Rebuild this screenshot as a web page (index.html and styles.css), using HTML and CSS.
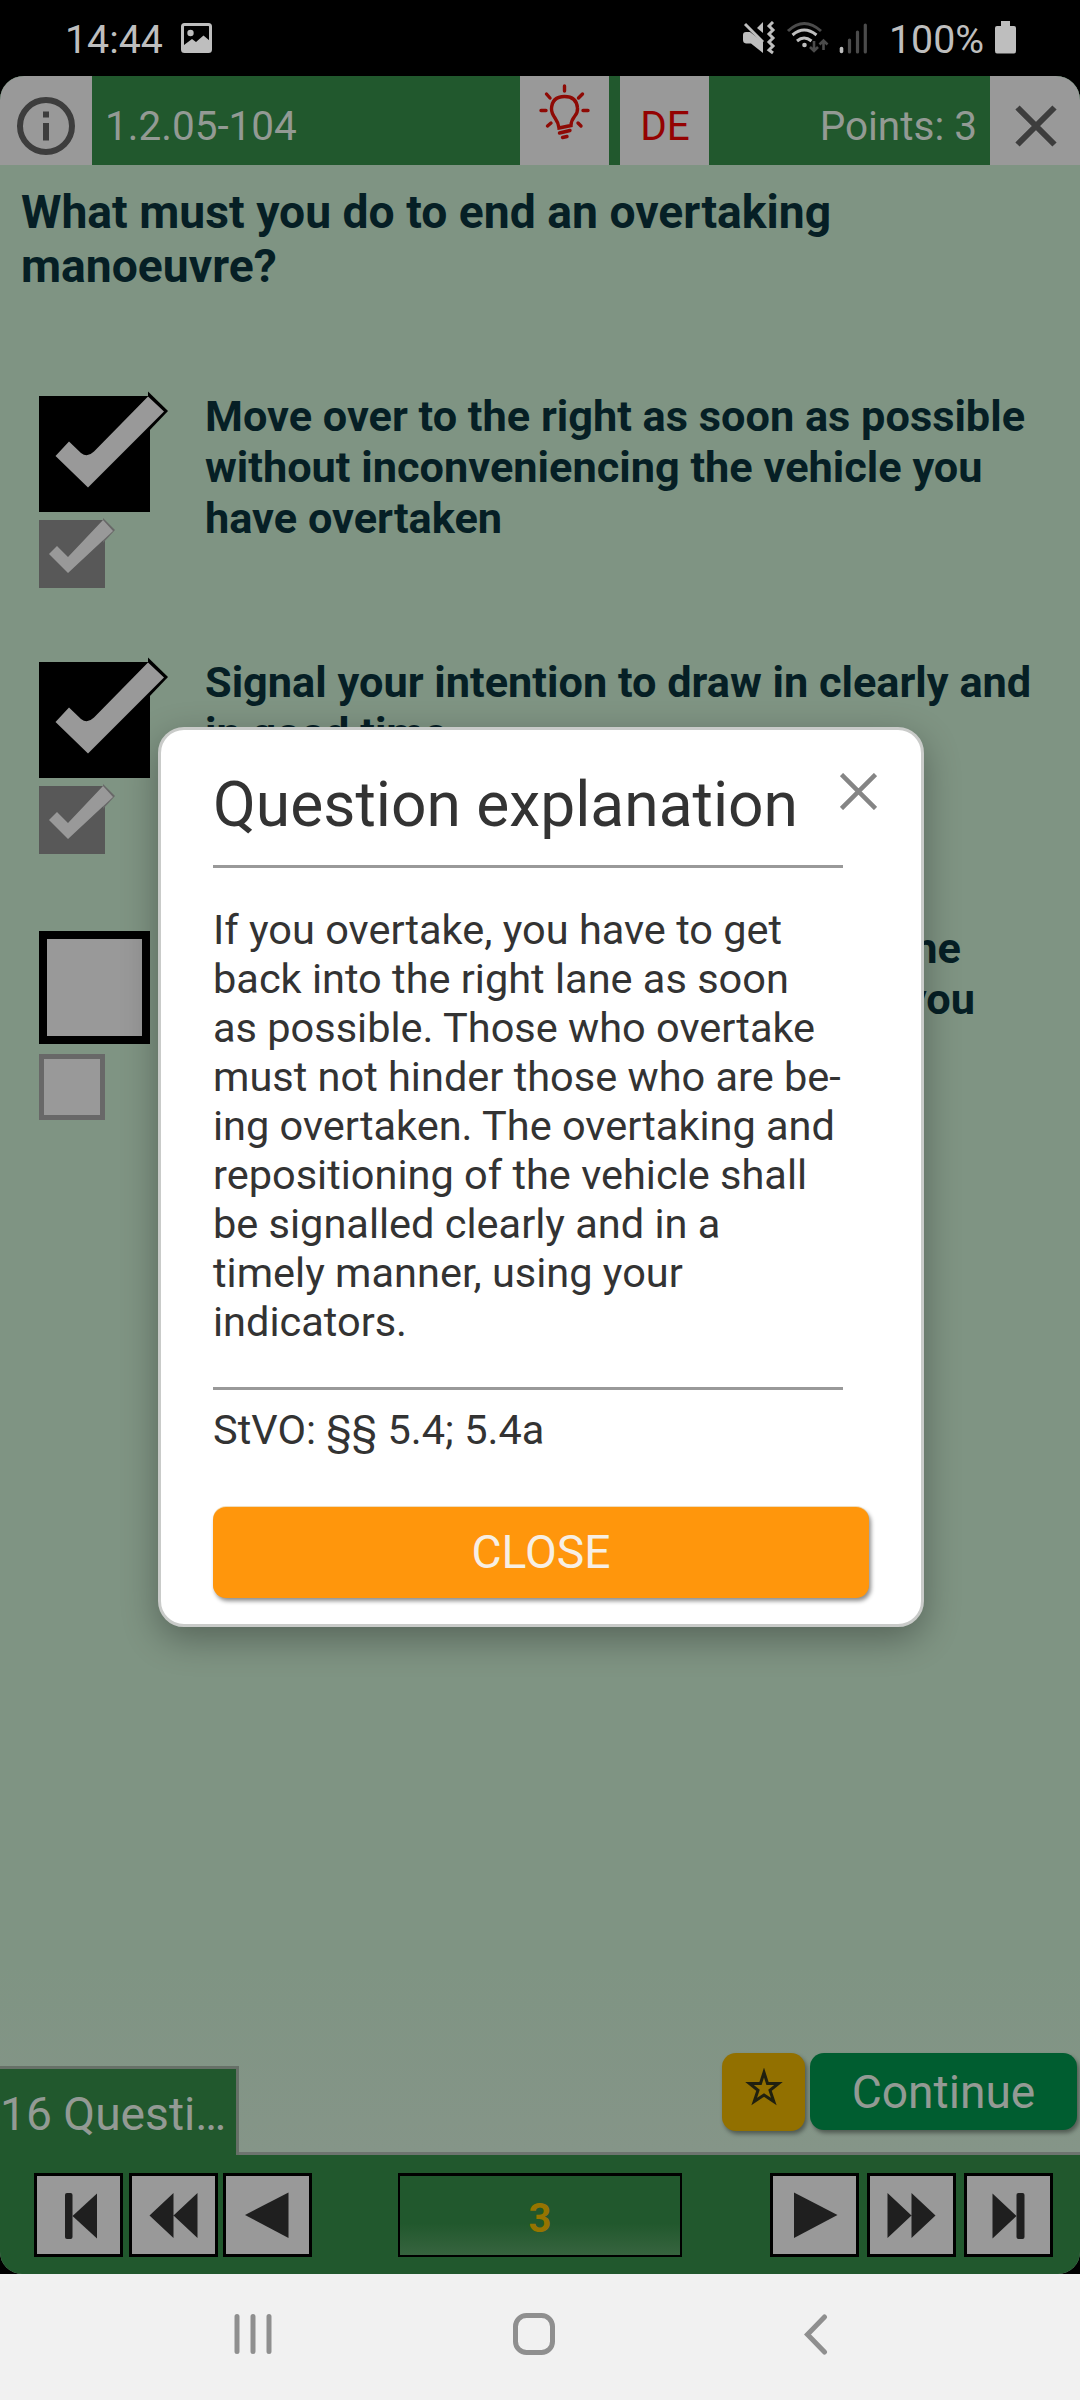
FILE: index.html
```html
<!DOCTYPE html>
<html lang="en">
<head>
<meta charset="utf-8">
<title>Question explanation</title>
<link rel="stylesheet" href="styles.css">
</head>
<body>
<svg width="0" height="0" class="defs">
  <symbol id="tick-large" viewBox="0 0 132 124">
    <path d="M0 5H111V121H0Z" fill="#000"/>
    <path d="M109 0.500L129 20L109 41V12Z" fill="#000"/>
    <path d="M109 5.500L125 20.500L49 96.500L16.500 65L30 50.500L42 62Q48.500 67 55 60.500Z" fill="#999"/>
  </symbol>
  <symbol id="tick-small" viewBox="0 0 80 70">
    <path d="M0 2H66V70H0Z" fill="#585858"/>
    <path d="M64 0L76 12L64 25Z" fill="#686868"/>
    <path d="M64 2L74 13L29 55L10 36L18 28L29 39Z" fill="#999"/>
  </symbol>
</svg>
<div class="phone">
  <header class="status">
    <span class="clock">14:44</span>
    <svg class="photo" width="31" height="30" viewBox="0 0 31 30"><rect x="1.500" y="1.500" width="28" height="27" rx="2" fill="none" stroke="#bebebe" stroke-width="3"/><circle cx="9.500" cy="10" r="3.200" fill="#bebebe"/><path d="M3 22L11 16L15 19L22.500 12.500L29 18V28H3Z" fill="#bebebe"/></svg>
    <svg class="signals" width="126" height="34" viewBox="742 21 126 34" fill="none">
      <path d="M743 35Q743 32 746 32H750L763 42V53L751 43.500H746Q743 43 743 40Z" fill="#bebebe"/>
      <path d="M757 28L763 22V33Z" fill="#bebebe"/>
      <path d="M745 24L763 42" stroke="#bebebe" stroke-width="3"/>
      <path d="M773 22L769 26L773 30L769 34L773 38L769 42L773 46L769 50L773 53" stroke="#bebebe" stroke-width="3"/>
      <path d="M788 31Q804 16 821 31" stroke="#4b4b4b" stroke-width="3"/>
      <path d="M792.500 35Q804 25 816.500 35M797 41Q804 35 811.500 41" stroke="#bebebe" stroke-width="3"/>
      <circle cx="804.500" cy="45" r="2.300" fill="#bebebe"/>
      <path d="M814 41V51M810 47L814 51L818 47M823.500 50V40M819.500 44.500L823.500 40.500L827.500 44.500" stroke="#4b4b4b" stroke-width="2.600"/>
      <path d="M841.500 48.500V51.500" stroke="#bebebe" stroke-width="3.600" stroke-linecap="round"/>
      <path d="M849.500 40V52M857.500 32V52M865.300 25V52" stroke="#4b4b4b" stroke-width="3.200" stroke-linecap="round"/>
    </svg>
    <span class="percent">100%</span>
    <svg class="battery" width="21" height="33" viewBox="0 0 21 33"><path d="M6 0H15V5H19Q21 5 21 7V30Q21 32.500 19 32.500H2Q0 32.500 0 30V7Q0 5 2 5H6Z" fill="#bebebe"/></svg>
  </header>

  <main class="app">
    <div class="toolbar">
      <button class="tool info"><svg width="60" height="60" viewBox="0 0 60 60"><circle cx="30" cy="30" r="26" fill="none" stroke="#3d3d3d" stroke-width="6"/><path d="M27 15.500H33V21.500H27ZM27 27H33V44.500H27Z" fill="#3d3d3d"/></svg></button>
      <span class="number">1.2.05-104</span>
      <button class="tool hint"><svg width="51" height="56" viewBox="0 0 51 56" fill="none" stroke="#8e0a05" stroke-width="3.400" stroke-linecap="round"><path d="M20 44L32 41.500Q32 37 35.500 32.500Q39 28.500 38.500 24Q37.500 12.500 25.500 12.500Q13 12.500 12.500 25Q12.500 29 16 34Q19.500 39 20 44ZM20.500 49L31 46.500M23.500 53.500L28 52.500M25.500 2V7M7.500 10L11 14M43.500 10L39.500 14M2 26.500H7M44 26.500H49M8.500 42L12 39M42 42L39 39"/></svg></button>
      <button class="tool lang">DE</button>
      <span class="points">Points: 3</span>
      <button class="tool close"><svg width="42" height="42" viewBox="0 0 42 42"><path d="M2.500 2.500L39.500 39.500M39.500 2.500L2.500 39.500" stroke="#3d3d3d" stroke-width="6"/></svg></button>
    </div>

    <h1 class="question">What must you do to end an overtaking manoeuvre?</h1>

    <section class="options">
      <div class="option">
        <div class="checks"><svg class="large" width="132" height="124"><use href="#tick-large"/></svg><svg class="small" width="80" height="70"><use href="#tick-small"/></svg></div>
        <p>Move over to the right as soon as possible<br>without inconveniencing the vehicle you<br>have overtaken</p>
      </div>
      <div class="option">
        <div class="checks"><svg class="large" width="132" height="124"><use href="#tick-large"/></svg><svg class="small" width="80" height="70"><use href="#tick-small"/></svg></div>
        <p>Signal your intention to draw in clearly and<br>in good time</p>
      </div>
      <div class="option">
        <div class="checks"><span class="box"></span><span class="box mini"></span></div>
        <p class="covered"><span class="first">the</span><span class="second">you</span></p>
      </div>
    </section>

    <div class="actions">
      <div class="tab">16 Questi…</div>
      <button class="mark"><svg width="38" height="38" viewBox="0 0 38 38"><path d="M19 4.500L22.500 15.500H33.500L25 22.300L28.800 33.500L19 27L9.200 33.500L13 22.300L4.500 15.500H15.500Z" fill="none" stroke="#20200f" stroke-width="3"/></svg></button>
      <button class="continue">Continue</button>
    </div>

    <nav class="pager">
      <button class="step"><svg width="60" height="50" viewBox="0 0 60 50"><rect x="16" y="3" width="7.500" height="46" rx="2"/><path d="M23.500 26L48 3.500V48.500Z"/></svg></button>
      <button class="step"><svg width="60" height="50" viewBox="0 0 60 50"><path d="M5.500 25.500L29.500 3V25.500L53.500 3V48L29.500 25.500V48Z"/></svg></button>
      <button class="step"><svg width="60" height="50" viewBox="0 0 60 50"><path d="M7 25L50.500 2.500V48Z"/></svg></button>
      <div class="current">3</div>
      <button class="step"><svg width="60" height="50" viewBox="0 0 60 50"><path d="M52.500 25L9 2.500V48Z"/></svg></button>
      <button class="step"><svg width="60" height="50" viewBox="0 0 60 50"><path d="M53.500 25.500L29.500 3V25.500L5.500 3V48L29.500 25.500V48Z"/></svg></button>
      <button class="step"><svg width="60" height="50" viewBox="0 0 60 50"><rect x="37.500" y="3" width="8" height="46" rx="2"/><path d="M37.500 26L13.500 3.500V48.500Z"/></svg></button>
    </nav>

    <section class="dialog" role="dialog">
      <div class="dialog-head">
        <h2>Question explanation</h2>
        <svg class="dismiss" width="37" height="37" viewBox="0 0 37 37"><path d="M1.500 1.500L35.500 35.500M35.500 1.500L1.500 35.500" stroke="#858585" stroke-width="4.500"/></svg>
      </div>
      <hr>
      <p class="explain">If you overtake, you have to get<br>back into the right lane as soon<br>as possible. Those who overtake<br>must not hinder those who are be-<br>ing overtaken. The overtaking and<br>repositioning of the vehicle shall<br>be signalled clearly and in a<br>timely manner, using your<br>indicators.</p>
      <hr>
      <p class="law">StVO: §§ 5.4; 5.4a</p>
      <button class="dialog-close">CLOSE</button>
    </section>
  </main>

  <footer class="system">
    <svg width="38" height="40" viewBox="0 0 38 40"><path d="M3 2.500V37.500M19 2.500V37.500M35 2.500V37.500" stroke="#8f8f8f" stroke-width="5" stroke-linecap="round"/></svg>
    <svg width="42" height="42" viewBox="0 0 42 42"><rect x="2.500" y="2.500" width="37" height="37" rx="11" fill="none" stroke="#8f8f8f" stroke-width="5"/></svg>
    <svg width="24" height="41" viewBox="0 0 24 41"><path d="M20.500 3L3.500 20.500L20.500 38" fill="none" stroke="#8f8f8f" stroke-width="5" stroke-linecap="round"/></svg>
  </footer>
</div>
</body>
</html>
```
FILE: styles.css
```css
* { box-sizing: border-box; }

body {
  margin: 0;
  background: #000;
  font-family: Roboto, "Liberation Sans", sans-serif;
}

h1, h2, p { margin: 0; }

button {
  margin: 0;
  padding: 0;
  border: 0;
  font: inherit;
}

svg { display: block; flex: none; }

.defs { display: none; }

.phone {
  display: flex;
  flex-direction: column;
  width: 1080px;
  height: 2400px;
  overflow: hidden;
}

/* Android status bar */
.status {
  display: flex;
  height: 76px;
  padding: 21px 64px 0 65px;
  color: #bebebe;
  font-size: 39.3px;
  line-height: 38px;
}

.clock { width: 116px; }
.photo { margin-top: 2px; }
.signals { margin-left: auto; }
.percent { margin-left: 21px; width: 106px; }

/* Quiz page */
.app {
  position: relative;
  display: flex;
  flex-direction: column;
  height: 2198px;
  overflow: hidden;
  border-radius: 24px 24px 22px 22px;
  background: linear-gradient(#7f9483 0 1890px, #859588 2076px);
}

.toolbar {
  display: flex;
  height: 89px;
  background: #21582d;
  color: #939a94;
  font-size: 40.5px;
  line-height: 100px;
}

.tool {
  display: flex;
  align-items: center;
  justify-content: center;
  width: 89px;
  background: #999;
}

.info { width: 92px; padding-top: 11px; }
.number { width: 428px; padding-left: 13px; }
.hint { align-items: flex-start; padding-top: 8px; margin-right: 11px; }
.lang { align-items: flex-start; height: 89px; padding-left: 1px; color: #940202; }
.points { width: 281px; padding-right: 13px; text-align: right; }
.close { width: 90px; padding-top: 11px; padding-left: 1px; }

.question {
  height: 226px;
  padding: 20px 21px 0;
  color: #061f25;
  font-size: 46.25px;
  line-height: 54px;
}

.options { flex: 1; }

.option {
  display: flex;
  height: 266px;
  padding-left: 39px;
  color: #061f25;
  font-size: 43.3px;
  line-height: 51px;
  font-weight: 700;
}

.checks { width: 166px; }
.small { margin-top: 3px; }

.box {
  display: block;
  width: 111px;
  height: 113px;
  margin-top: 8px;
  border: 8px solid #000;
  background: #999;
}

.box.mini {
  width: 66px;
  height: 66px;
  margin-top: 10px;
  border: 5px solid #686868;
}

.covered { width: 770px; text-align: right; }
.covered span { display: block; }
.first { padding-right: 14px; }

.actions {
  display: flex;
  height: 102px;
  border-bottom: 3px solid #6d746f;
}

.tab {
  width: 239px;
  height: 89px;
  margin: 13px auto 0 0;
  border: solid #667067;
  border-width: 3px 3px 0 0;
  background: #21582d;
  color: #939a94;
  font-size: 46.2px;
  line-height: 90px;
  white-space: nowrap;
}

.mark, .continue {
  border-radius: 14px;
  box-shadow: 2px 3px 4px rgba(0, 0, 0, .4);
}

.mark {
  display: flex;
  justify-content: center;
  width: 83px;
  height: 78px;
  padding-top: 15px;
  background: #927000;
}

.continue {
  width: 267px;
  height: 77px;
  margin: 0 3px 0 5px;
  background: #005d30;
  color: #939a94;
  font-size: 46.2px;
  line-height: 79px;
}

.pager {
  display: grid;
  grid-template-columns: 89px 88px 169px 284px 171px 91px 91px;
  column-gap: 6px;
  height: 119px;
  padding: 18px 27px 17px 34px;
  background: #21582d;
}

.step {
  display: flex;
  align-items: center;
  justify-content: center;
  width: 89px;
  height: 84px;
  border: 3px solid #000;
  background: #999;
  fill: #1f1f1f;
}

.current {
  height: 84px;
  border: 2px solid #000;
  border-top-width: 3px;
  background: linear-gradient(#21582d 60%, #37643f);
  color: #967400;
  font-size: 40px;
  line-height: 85px;
  font-weight: 700;
  text-align: center;
}

.current ~ .step { justify-self: end; }

/* Explanation dialog floats over the quiz */
.dialog {
  position: absolute;
  top: 651px;
  left: 158px;
  width: 766px;
  height: 900px;
  padding: 39px 52px 0;
  border: 3px solid #c9cbc9;
  border-radius: 26px;
  background: #fff;
  box-shadow: 0 12px 36px rgba(0, 0, 0, .32);
  color: #333;
  font-size: 41.5px;
  line-height: 49px;
}

.dialog-head {
  display: flex;
  justify-content: space-between;
  width: 664px;
  height: 96px;
}

.dialog h2 {
  font-size: 62.3px;
  line-height: 72px;
  font-weight: 400;
  white-space: nowrap;
}

.dismiss { margin-top: 4px; }

.dialog hr {
  width: 630px;
  height: 3px;
  margin: 0;
  border: 0;
  background: #999;
}

.explain { margin: 37px 0 41px; white-space: nowrap; }
.law { margin: 15px 0 53px; }

.dialog-close {
  display: block;
  width: 656px;
  height: 91px;
  border-radius: 13px;
  background: #ff960c;
  box-shadow: 2px 3px 4px rgba(0, 0, 0, .45), 0 -1px 0 #f6e3c0;
  color: #f7efe4;
  font-size: 46.2px;
  line-height: 91px;
}

/* Android navigation bar */
.system {
  display: grid;
  grid-template-columns: repeat(3, 1fr);
  align-items: center;
  justify-items: center;
  height: 126px;
  padding: 0 123px 6px 112px;
  background: #f1f1f1;
}
```
